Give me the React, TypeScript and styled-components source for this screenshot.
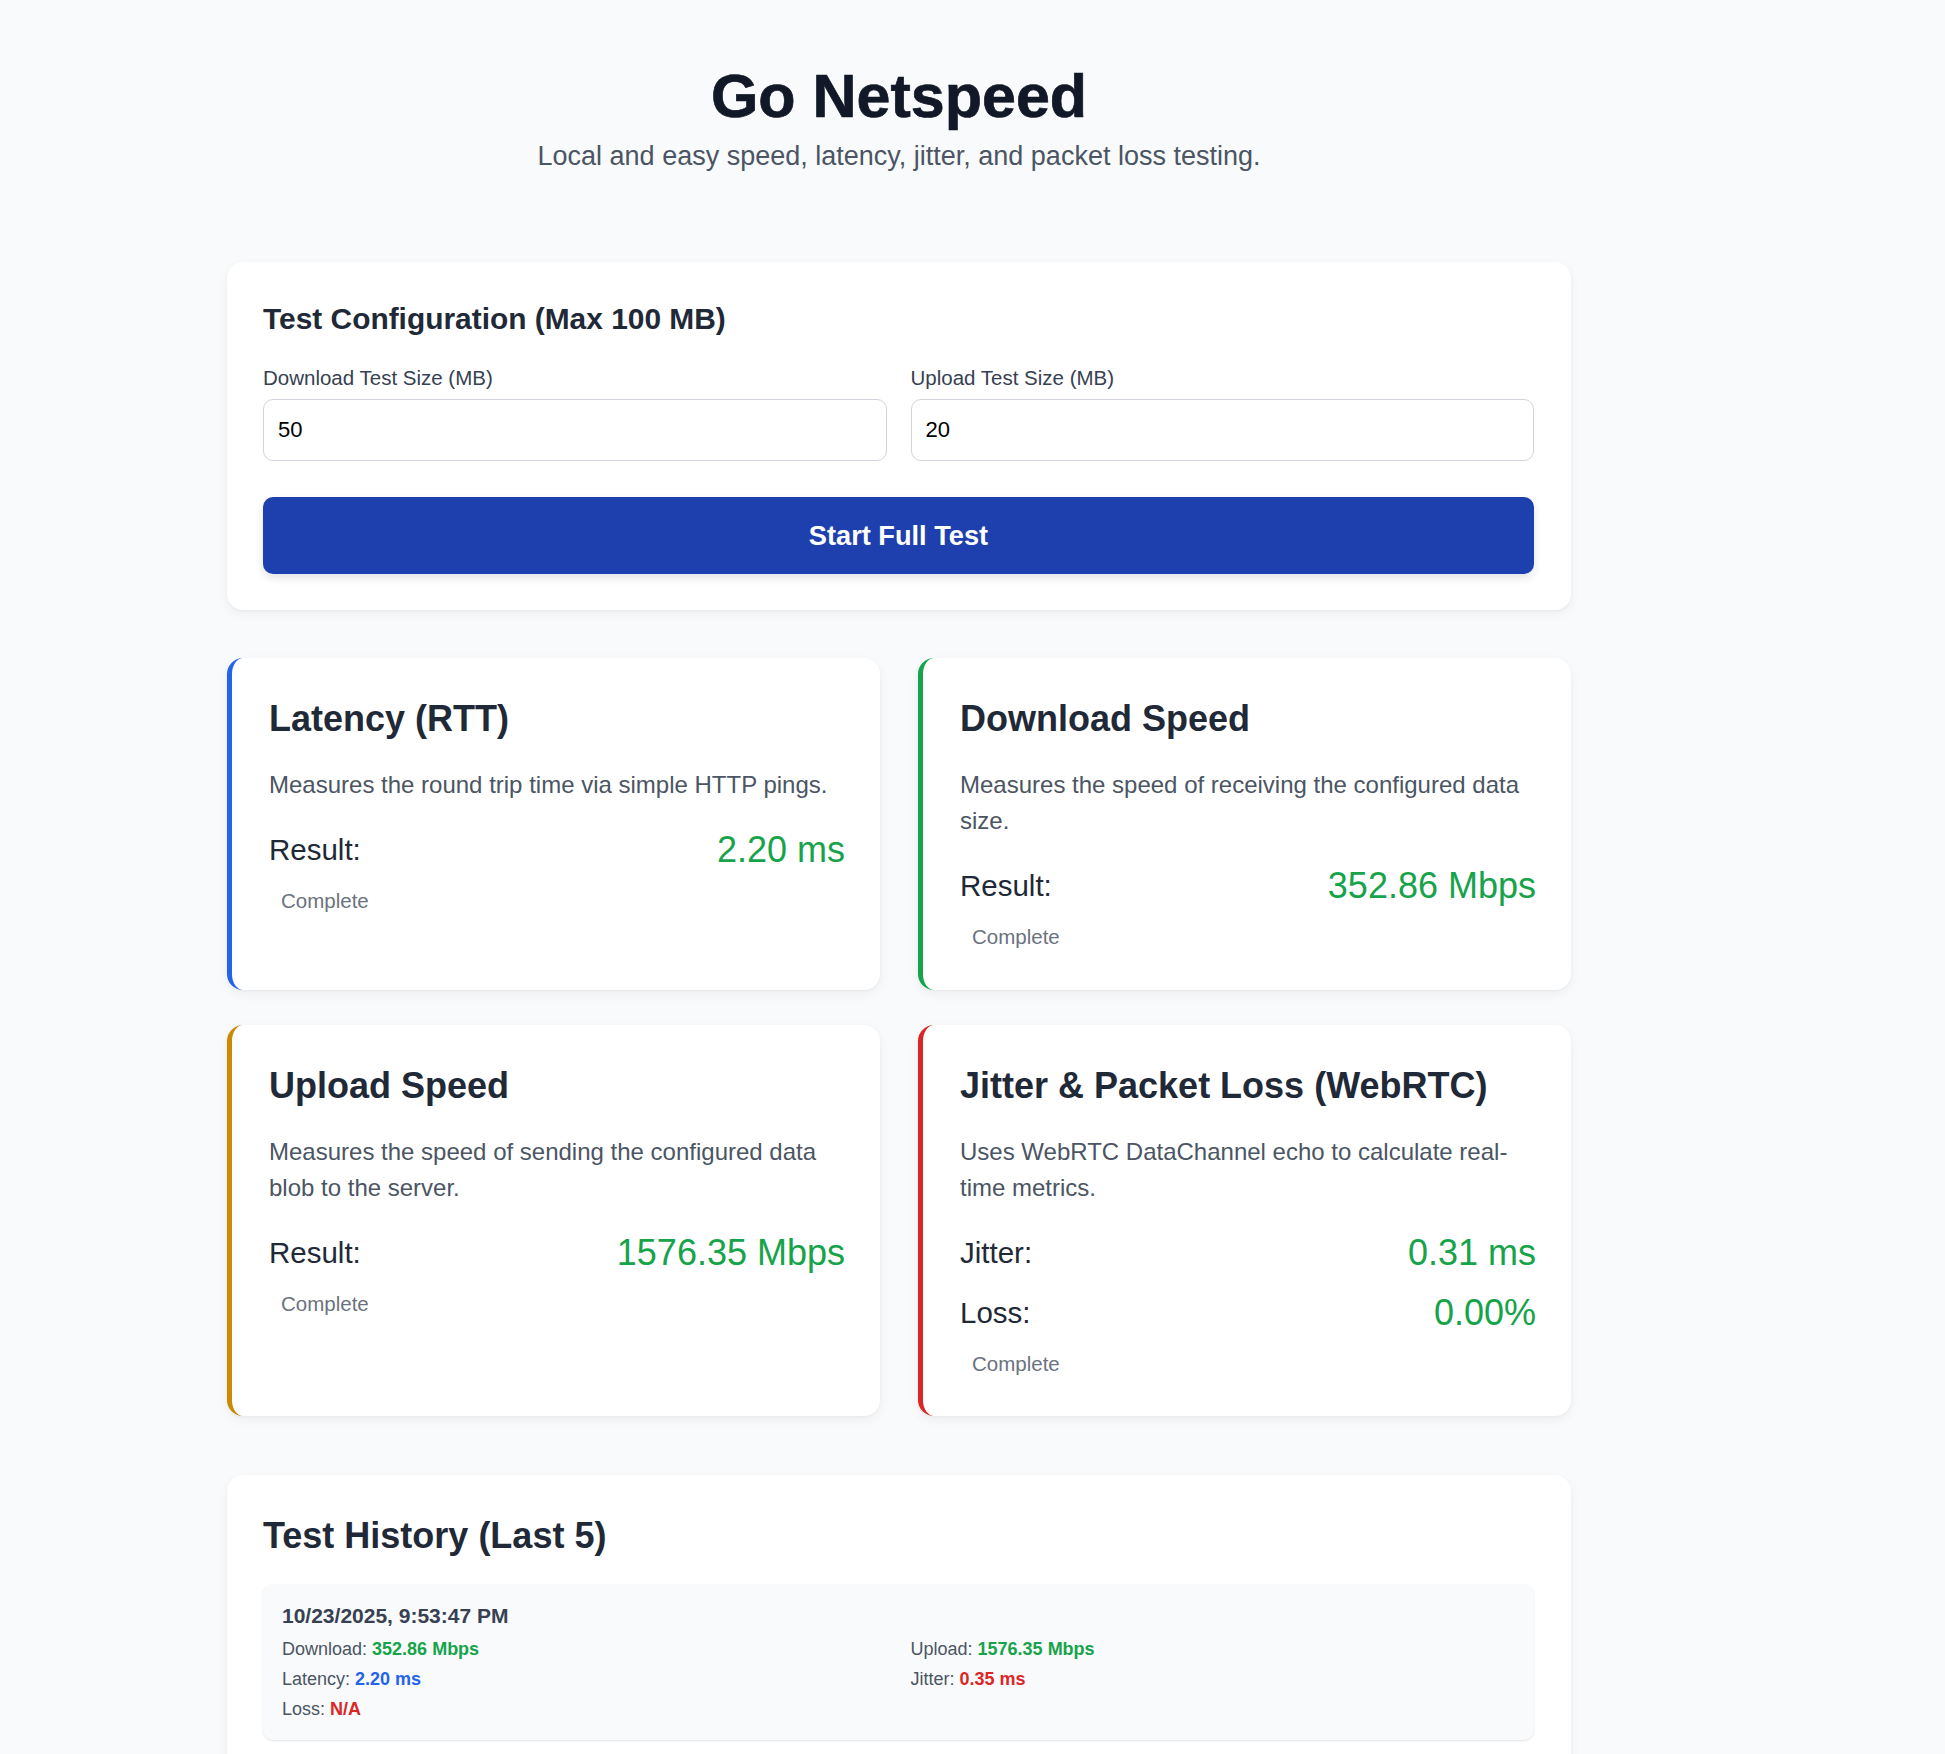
import styled, { createGlobalStyle } from 'styled-components'

const GlobalStyle = createGlobalStyle`
  * {
    box-sizing: border-box;
  }

  body {
    margin: 0;
    background: #f9fafb;
    font-family: 'Liberation Sans', Arial, sans-serif;
    color: #1f2937;
  }
`

type Accent = 'blue' | 'green' | 'amber' | 'red'

const accents: Record<Accent, string> = {
  blue: '#2563eb',
  green: '#16a34a',
  amber: '#ca8a04',
  red: '#dc2626',
}

type Metric = { label: string; value: string }

type TestInfo = {
  title: string
  description: string
  accent: Accent
  metrics: Metric[]
}

const tests: TestInfo[] = [
  {
    title: 'Latency (RTT)',
    description: 'Measures the round trip time via simple HTTP pings.',
    accent: 'blue',
    metrics: [{ label: 'Result:', value: '2.20 ms' }],
  },
  {
    title: 'Download Speed',
    description: 'Measures the speed of receiving the configured data size.',
    accent: 'green',
    metrics: [{ label: 'Result:', value: '352.86 Mbps' }],
  },
  {
    title: 'Upload Speed',
    description: 'Measures the speed of sending the configured data blob to the server.',
    accent: 'amber',
    metrics: [{ label: 'Result:', value: '1576.35 Mbps' }],
  },
  {
    title: 'Jitter & Packet Loss (WebRTC)',
    description: 'Uses WebRTC DataChannel echo to calculate real-time metrics.',
    accent: 'red',
    metrics: [
      { label: 'Jitter:', value: '0.31 ms' },
      { label: 'Loss:', value: '0.00%' },
    ],
  },
]

type Tone = 'good' | 'info' | 'bad'

const tones: Record<Tone, string> = {
  good: '#16a34a',
  info: '#2563eb',
  bad: '#dc2626',
}

const historyStats: { label: string; value: string; tone: Tone }[] = [
  { label: 'Download', value: '352.86 Mbps', tone: 'good' },
  { label: 'Upload', value: '1576.35 Mbps', tone: 'good' },
  { label: 'Latency', value: '2.20 ms', tone: 'info' },
  { label: 'Jitter', value: '0.35 ms', tone: 'bad' },
  { label: 'Loss', value: 'N/A', tone: 'bad' },
]

export default function App() {
  return (
    <>
      <GlobalStyle />
      <Page>
        <Container>
          <Header>
            <Title>Go Netspeed</Title>
            <Subtitle>Local and easy speed, latency, jitter, and packet loss testing.</Subtitle>
          </Header>

          <ConfigCard>
            <ConfigTitle>Test Configuration (Max 100 MB)</ConfigTitle>
            <Fields>
              <Field>
                <Label htmlFor="download-size">Download Test Size (MB)</Label>
                <Input id="download-size" type="number" defaultValue={50} />
              </Field>
              <Field>
                <Label htmlFor="upload-size">Upload Test Size (MB)</Label>
                <Input id="upload-size" type="number" defaultValue={20} />
              </Field>
            </Fields>
            <StartButton>Start Full Test</StartButton>
          </ConfigCard>

          <TestGrid>
            {tests.map((test) => (
              <TestCard key={test.title} $accent={test.accent}>
                <CardTitle>{test.title}</CardTitle>
                <Description>{test.description}</Description>
                {test.metrics.map((m) => (
                  <ResultRow key={m.label}>
                    <ResultLabel>{m.label}</ResultLabel>
                    <ResultValue>{m.value}</ResultValue>
                  </ResultRow>
                ))}
                <Status>Complete</Status>
              </TestCard>
            ))}
          </TestGrid>

          <HistoryCard>
            <CardTitle>Test History (Last 5)</CardTitle>
            <HistoryEntry>
              <EntryDate>10/23/2025, 9:53:47 PM</EntryDate>
              <EntryStats>
                {historyStats.map((s) => (
                  <Stat key={s.label}>
                    {s.label}: <StatValue $tone={s.tone}>{s.value}</StatValue>
                  </Stat>
                ))}
              </EntryStats>
            </HistoryEntry>
          </HistoryCard>
        </Container>
      </Page>
    </>
  )
}

const Page = styled.main`
  max-width: 1798px;
  padding: 61px 0 60px;
`

const Container = styled.div`
  max-width: 1344px;
  margin: 0 auto;
`

const Header = styled.header`
  text-align: center;
  margin-bottom: 90px;
`

const Title = styled.h1`
  margin: 0;
  font-size: 61px;
  font-weight: 800;
  color: #111827;
  -webkit-text-stroke: 0.7px #111827;
`

const Subtitle = styled.p`
  margin: 10px 0 0;
  font-size: 27px;
  color: #4b5563;
`

const Card = styled.section`
  background: #ffffff;
  border-radius: 16px;
  box-shadow: 0 4px 12px rgba(15, 23, 42, 0.05), 0 1px 3px rgba(15, 23, 42, 0.04);
`

const ConfigCard = styled(Card)`
  padding: 39.5px 37px 36px 36px;
`

const ConfigTitle = styled.h3`
  margin: 0 0 30px;
  font-size: 29.9px;
  font-weight: 700;
  color: #1f2937;
`

const Fields = styled.div`
  display: grid;
  grid-template-columns: 1fr 1fr;
  gap: 24px;
`

const Field = styled.div`
  display: flex;
  flex-direction: column;
`

const Label = styled.label`
  font-size: 20.5px;
  color: #374151;
  margin-bottom: 9.5px;
`

const Input = styled.input`
  width: 100%;
  padding: 17px 14px;
  font-family: inherit;
  font-size: 22px;
  color: #000000;
  background: #ffffff;
  border: 1px solid #d1d5db;
  border-radius: 10px;
  outline: none;
  -moz-appearance: textfield;

  &::-webkit-inner-spin-button,
  &::-webkit-outer-spin-button {
    -webkit-appearance: none;
    margin: 0;
  }
`

const StartButton = styled.button`
  display: block;
  width: 100%;
  height: 77px;
  margin-top: 36px;
  border: none;
  border-radius: 10px;
  background: #1e40af;
  color: #ffffff;
  font-family: inherit;
  font-size: 27.2px;
  font-weight: 700;
  cursor: pointer;
  box-shadow: 0 4px 8px rgba(15, 23, 42, 0.12);
`

const TestGrid = styled.div`
  display: grid;
  grid-template-columns: 1fr 1fr;
  column-gap: 38px;
  row-gap: 35px;
  margin-top: 48px;
`

const TestCard = styled(Card)<{ $accent: Accent }>`
  padding: 40px 35px 40.5px 37px;
  border-left: 5px solid ${(p) => accents[p.$accent]};
`

const CardTitle = styled.h2`
  margin: 0 0 27px;
  font-size: 36px;
  font-weight: 700;
  color: #1f2937;
`

const Description = styled.p`
  margin: 0 0 26px;
  font-size: 24px;
  line-height: 36px;
  color: #4b5563;
`

const ResultRow = styled.div`
  display: flex;
  justify-content: space-between;
  align-items: center;
  margin: 18px 0;
`

const ResultLabel = styled.span`
  font-size: 29.5px;
  color: #1f2937;
`

const ResultValue = styled.span`
  font-size: 36px;
  color: #16a34a;
`

const Status = styled.div`
  padding: 0 12px;
  font-size: 20.5px;
  color: #6b7280;
`

const HistoryCard = styled(Card)`
  margin-top: 59px;
  padding: 39.5px 37px 37px 36px;
`

const HistoryEntry = styled.div`
  padding: 20px 19px 16px;
  background: #f8fafc;
  border-radius: 10px;
  box-shadow: 0 1px 2px rgba(15, 23, 42, 0.12);
`

const EntryDate = styled.div`
  font-size: 21px;
  font-weight: 700;
  color: #374151;
  margin-bottom: 6px;
`

const EntryStats = styled.div`
  display: grid;
  grid-template-columns: 1fr 1fr;
  column-gap: 24px;
`

const Stat = styled.div`
  font-size: 18px;
  line-height: 30px;
  color: #4b5563;
`

const StatValue = styled.strong<{ $tone: Tone }>`
  color: ${(p) => tones[p.$tone]};
`
